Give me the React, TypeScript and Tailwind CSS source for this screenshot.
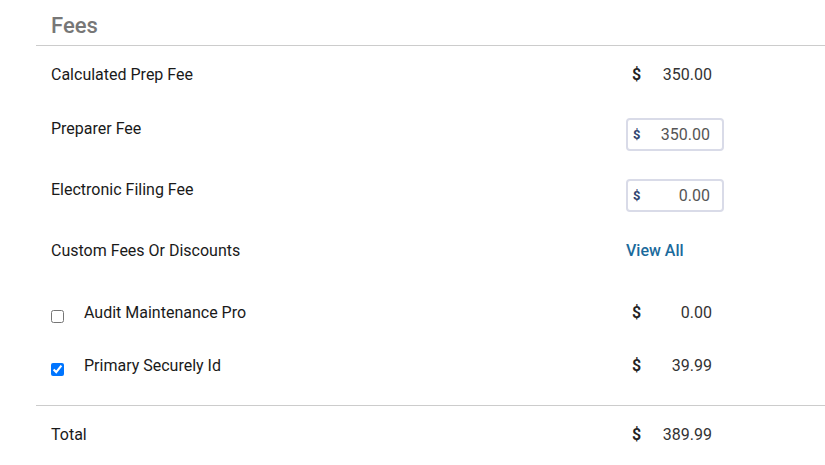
import React from "react";

const rowLabel = "w-[575px] shrink-0 text-[16px] leading-5 text-[#1a1a1a]";

function Amount({ value }: { value: string }) {
  return (
    <div className="flex w-[86px] items-center text-[16px] leading-5 text-[#333]">
      <span className="pl-[6px] font-semibold text-[#222]">$</span>
      <span className="flex-1 text-right">{value}</span>
    </div>
  );
}

function MoneyInput({ value }: { value: string }) {
  return (
    <div className="flex h-[33px] w-[98px] items-center rounded-[4px] border-2 border-[#d9dbe8] pl-[5px] pr-[12px]">
      <span className="text-[13px] font-bold text-[#2f4470]">$</span>
      <span className="flex-1 text-right text-[16px] text-[#555]">{value}</span>
    </div>
  );
}

export default function App() {
  const extras = [
    { label: "Audit Maintenance Pro", value: "0.00", checked: false, top: "mt-[42px]" },
    { label: "Primary Securely Id", value: "39.99", checked: true, top: "mt-[33px]" },
  ];

  return (
    <div className="h-[465px] w-[825px] overflow-hidden bg-white font-['Roboto',sans-serif]">
      {/* Header */}
      <div className="ml-[36px] h-[46px] border-b border-[#cccccc] pl-[15px] pt-[12px]">
        <h2 className="text-[22px] leading-[28px] font-medium text-[#777777]">Fees</h2>
      </div>

      <div className="pl-[51px]">
        <div className="mt-[19px] flex h-5 items-center">
          <div className={rowLabel}>Calculated Prep Fee</div>
          <Amount value="350.00" />
        </div>

        <div className="mt-[33px] flex items-start">
          <div className={`${rowLabel} pt-px`}>Preparer Fee</div>
          <MoneyInput value="350.00" />
        </div>

        <div className="mt-[28px] flex items-start">
          <div className={`${rowLabel} pt-px`}>Electronic Filing Fee</div>
          <MoneyInput value="0.00" />
        </div>

        <div className="mt-[29px] flex h-5 items-center">
          <div className={rowLabel}>Custom Fees Or Discounts</div>
          <a className="text-[16px] leading-5 font-medium text-[#1b6a9c]">View All</a>
        </div>

        {extras.map((item) => (
          <div key={item.label} className={`${item.top} flex h-5 items-center`}>
            <div className="flex w-[575px] shrink-0 items-center">
              <input
                type="checkbox"
                defaultChecked={item.checked}
                className="m-0 mt-[7px] h-[13px] w-[13px]"
              />
              <span className="ml-[20px] text-[16px] leading-5 text-[#1a1a1a]">
                {item.label}
              </span>
            </div>
            <Amount value={item.value} />
          </div>
        ))}
      </div>

      <div className="ml-[36px] mt-[29px] border-t border-[#cccccc] pl-[15px]">
        <div className="mt-[19px] flex h-5 items-center">
          <div className={rowLabel}>Total</div>
          <Amount value="389.99" />
        </div>
      </div>
    </div>
  );
}
